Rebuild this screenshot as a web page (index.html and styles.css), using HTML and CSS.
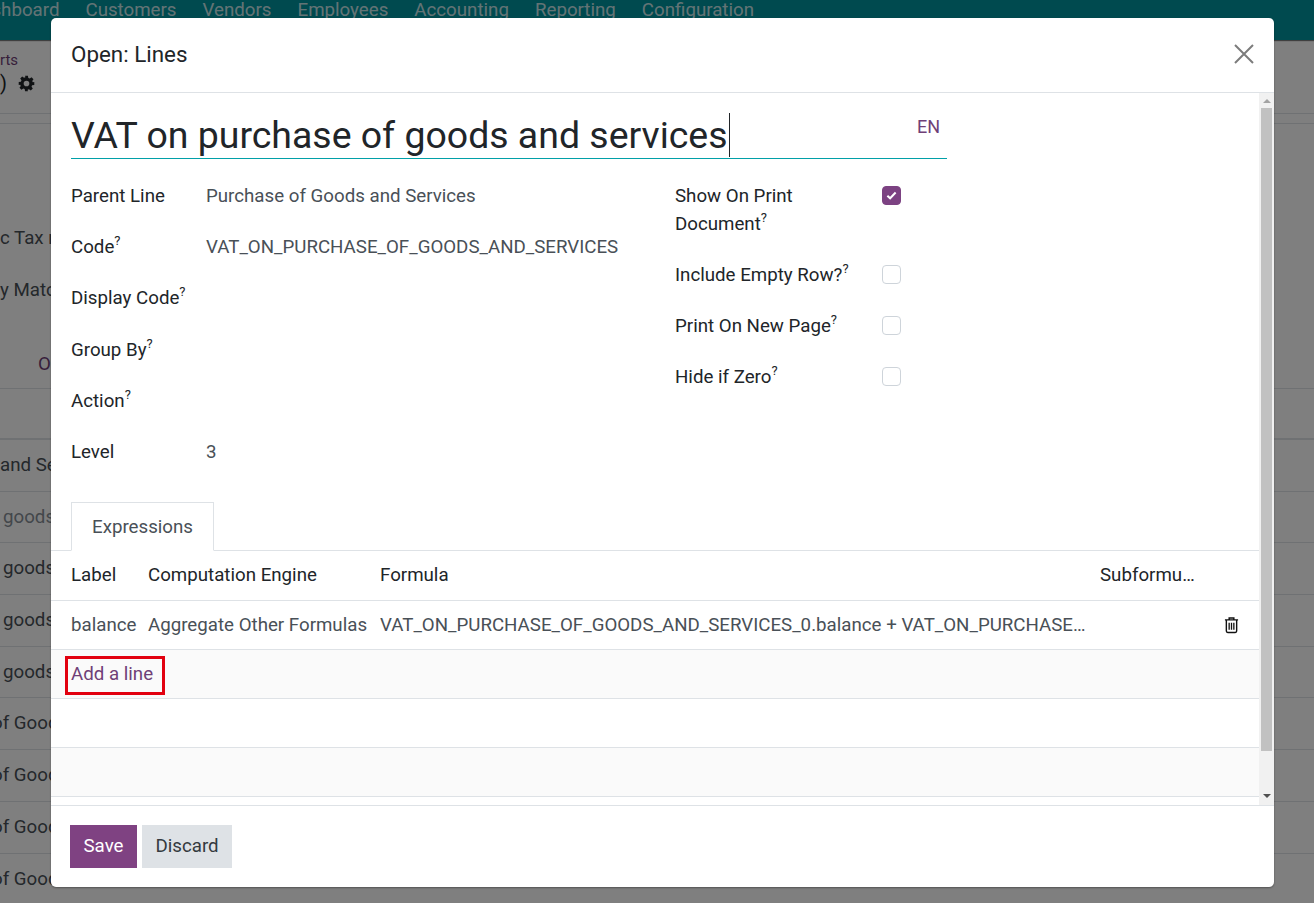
FILE: index.html
```html
<!DOCTYPE html>
<html lang="en">
<head>
<meta charset="utf-8">
<title>Open: Lines</title>
<link rel="stylesheet" href="styles.css">
</head>
<body>
<div class="page">
  <nav class="nav">
    <span class="nav-first">Dashboard</span><span>Customers</span><span>Vendors</span><span>Employees</span><span>Accounting</span><span>Reporting</span><span>Configuration</span>
  </nav>
  <div class="crumbs">
    <a class="crumb-link">rts</a>
    <div class="crumb-title"><span>)</span>
      <svg class="gear" viewBox="0 0 24 24"><path fill="currentColor" fill-rule="evenodd" d="M10 1h4l.6 3.1 1.9.8 2.6-1.8 2.8 2.8-1.8 2.6.8 1.9L23 10v4l-3.100.6-.8 1.900 1.800 2.600-2.800 2.800-2.600-1.800-1.900.8L14 23h-4l-.6-3.100-1.900-.8-2.600 1.800-2.800-2.800 1.800-2.600-.8-1.900L1 14v-4l3.100-.6.8-1.900-1.800-2.600 2.800-2.800 2.600 1.800 1.900-.8zM12 8a4 4 0 1 0 0 8 4 4 0 0 0 0-8z"/></svg>
    </div>
  </div>
  <div class="strip"></div>
  <div class="options">
    <div class="opt-line">c Tax report</div>
    <div class="opt-line">y Matching</div>
    <div class="opt-link">Options</div>
  </div>
  <div class="head-row"></div>
  <div class="bg-row"><span>and Services</span></div>
  <div class="bg-row muted"><span class="goods">goods and services</span></div>
  <div class="bg-row"><span class="goods">goods and services</span></div>
  <div class="bg-row"><span class="goods">goods and services</span></div>
  <div class="bg-row"><span class="goods">goods and services</span></div>
  <div class="bg-row"><span class="ofg">of Goods and Services</span></div>
  <div class="bg-row"><span class="ofg">of Goods and Services</span></div>
  <div class="bg-row"><span class="ofg">of Goods and Services</span></div>
  <div class="bg-row"><span class="ofg">of Goods and Services</span></div>
</div>

<div class="backdrop"></div>

<section class="modal">
  <header class="modal-head">
    <h4 class="modal-title">Open: Lines</h4>
    <svg class="close" viewBox="0 0 20 20"><path d="M1 1l18 18M19 1L1 19" fill="none" stroke="currentColor" stroke-width="2"/></svg>
  </header>

  <div class="modal-mid">
    <div class="modal-body">
      <div class="title-wrap">
        <div class="title-field"><span>VAT on purchase of goods and services</span><i class="caret"></i></div>
        <span class="lang">EN</span>
      </div>

      <div class="form">
        <div class="col-left">
          <div class="frow"><label>Parent Line</label><span class="val">Purchase of Goods and Services</span></div>
          <div class="frow"><label>Code<sup>?</sup></label><span class="val">VAT_ON_PURCHASE_OF_GOODS_AND_SERVICES</span></div>
          <div class="frow"><label>Display Code<sup>?</sup></label></div>
          <div class="frow"><label>Group By<sup>?</sup></label></div>
          <div class="frow"><label>Action<sup>?</sup></label></div>
          <div class="frow"><label>Level</label><span class="val">3</span></div>
        </div>
        <div class="col-right">
          <div class="crow first"><label>Show On Print Document<sup>?</sup></label>
            <span class="check on"><svg viewBox="0 0 12 12"><path d="M1.500 6.200l3 2.800 6-6.200" fill="none" stroke="#fff" stroke-width="2.200"/></svg></span></div>
          <div class="crow"><label>Include Empty Row?<sup>?</sup></label><span class="check"></span></div>
          <div class="crow"><label>Print On New Page<sup>?</sup></label><span class="check"></span></div>
          <div class="crow"><label>Hide if Zero<sup>?</sup></label><span class="check"></span></div>
        </div>
      </div>

      <div class="tabs"><span class="tab">Expressions</span></div>

      <div class="trow thead">
        <span>Label</span><span>Computation Engine</span><span>Formula</span><span>Subformu…</span>
      </div>
      <div class="trow tdata">
        <span>balance</span><span>Aggregate Other Formulas</span>
        <span class="formula">VAT_ON_PURCHASE_OF_GOODS_AND_SERVICES_0.balance + VAT_ON_PURCHASE_OF_GOODS_AND_SERVICES_1.balance</span>
        <span></span>
        <svg class="trash" viewBox="0 0 16 18"><path d="M5.500 3V1.500h5V3M1 3.500h14M2.500 3.500v12a1.500 1.500 0 0 0 1.500 1.500h8a1.500 1.500 0 0 0 1.500-1.500v-12" fill="none" stroke="currentColor" stroke-width="1.500"/><path d="M5.500 6.500v7.500M8 6.500v7.500M10.500 6.500v7.500" fill="none" stroke="currentColor" stroke-width="1.400"/></svg>
      </div>
      <div class="trow alt"><a class="add-line">Add a line<i class="mark"></i></a></div>
      <div class="trow"></div>
      <div class="trow alt"></div>
    </div>

    <div class="scrollbar">
      <i class="arrow up"></i>
      <div class="thumb"></div>
      <i class="arrow down"></i>
    </div>
  </div>

  <footer class="modal-foot">
    <button class="btn primary">Save</button>
    <button class="btn secondary">Discard</button>
  </footer>
</section>
</body>
</html>
```

FILE: styles.css
```css
* { box-sizing: border-box; }
html, body { margin: 0; height: 100%; overflow: hidden; }
body {
  position: relative;
  background: #fff;
  color: #495057;
  font-family: Roboto, "Noto Sans", sans-serif;
  font-size: 18.72px;
  line-height: 27px;
}

/* page behind the dialog */
.page { height: 903px; overflow: hidden; }
.nav {
  height: 40px;
  background: #00949f;
  display: flex;
  gap: 26px;
  color: rgba(255, 255, 255, .8);
  line-height: 20px;
  box-shadow: 0 1px 1px rgba(0, 0, 0, .5);
  white-space: nowrap;
}
.nav-first { margin-left: -31px; }
.crumbs { height: 73px; padding-top: 8px; }
.crumb-link { display: block; color: #6f3f77; font-size: 15px; line-height: 24px; }
.crumb-title { display: flex; align-items: center; gap: 11px; height: 22px; font-size: 20px; color: #212529; }
.gear { width: 17px; height: 17px; color: #212529; }
.strip { height: 11px; border-top: 1px solid #dee2e6; border-bottom: 1px solid #dee2e6; }
.options { height: 264px; padding-top: 88px; white-space: nowrap; }
.opt-line { height: 52px; line-height: 52px; }
.opt-link { margin-top: 22px; padding-left: 38px; height: 52px; line-height: 52px; color: #6f3f77; }
.head-row { height: 52px; border-top: 1px solid #dee2e6; border-bottom: 2px solid #dee2e6; }
.bg-row { height: 51.7px; border-bottom: 1px solid #dee2e6; line-height: 50px; white-space: nowrap; }
.bg-row.muted { color: #868e96; }
.goods { margin-left: 3px; }
.ofg { margin-left: -8px; display: inline-block; }

.backdrop { position: absolute; inset: 0; background: rgba(0, 0, 0, .5); }

/* dialog */
.modal {
  position: absolute;
  left: 51px;
  top: 18px;
  width: 1223px;
  height: 869px;
  display: flex;
  flex-direction: column;
  background: #fff;
  border-radius: 5px;
  box-shadow: 0 1px 2px rgba(0, 0, 0, .35);
  overflow: hidden;
}
.modal-head {
  flex: none;
  height: 75px;
  padding: 0 20px 2px;
  display: flex;
  align-items: center;
  justify-content: space-between;
  border-bottom: 1px solid #dee2e6;
}
.modal-title { margin: 0; font-size: 22.4px; font-weight: 400; color: #212529; }
.close { width: 20px; height: 20px; color: #7c7c7c; }

.modal-mid { flex: 1; min-height: 0; display: flex; }
.modal-body { flex: 1; min-width: 0; overflow: hidden; padding-top: 20px; }

.title-wrap { position: relative; width: 896px; padding-left: 20px; }
.title-field {
  height: 46px;
  display: flex;
  font-size: 37.45px;
  line-height: 44px;
  color: #212529;
  border-bottom: 1px solid #01a0a8;
}
.caret { width: 1px; height: 44px; margin-left: 1px; background: #212529; }
.lang { position: absolute; left: 866px; top: 0; font-size: 18px; line-height: 27px; color: #6f3f77; }

.form { display: flex; padding: 11px 0 0 20px; height: 318px; }
.col-left { width: 604px; }
.frow { display: flex; height: 51.2px; padding-top: 13px; }
.frow label { flex: none; width: 135px; color: #212529; }
.col-right { width: 226px; }
.crow { display: flex; justify-content: space-between; padding-top: 12.5px; height: 51.2px; line-height: 28px; }
.crow.first { height: 78px; padding-top: 12px; }
.crow label { flex: 0 1 190px; color: #212529; }
.val { white-space: nowrap; color: #495057; }
sup { font-size: 13px; line-height: 0; vertical-align: baseline; position: relative; top: -8px; }

.check {
  flex: none;
  width: 19px;
  height: 19px;
  margin-top: 4px;
  border: 1px solid #ced4da;
  border-radius: 4px;
  background: #fff;
}
.check.on { background: #7c4282; border-color: #7c4282; padding: 3px; }
.check svg { display: block; }

.tabs { height: 49px; margin-top: 25px; padding-left: 20px; border-bottom: 1px solid #dee2e6; }
.tab {
  display: block;
  width: 143px;
  height: 49px;
  padding: 11px 0 0 20px;
  background: #fff;
  border: 1px solid #dee2e6;
  border-bottom-color: #fff;
  color: #495057;
}

.trow {
  display: grid;
  grid-template-columns: 77px 232px 708px 120px 1fr;
  align-items: center;
  height: 49px;
  padding-left: 20px;
  border-bottom: 1px solid #dee2e6;
  white-space: nowrap;
}
.trow.thead { height: 50px; color: #212529; }
.thead span:nth-child(4) { margin-left: 12px; }
.alt { background: #fafafa; }
.formula { overflow: hidden; text-overflow: ellipsis; }
.trash { width: 15px; height: 18px; color: #111; margin-left: 16px; }

.add-line { position: relative; color: #6f3f77; }
.mark {
  position: absolute;
  left: -6px;
  top: -5px;
  width: 100px;
  height: 39px;
  border: 3px solid #e2000f;
}

.scrollbar {
  flex: none;
  width: 15px;
  background: #f1f1f1;
  display: flex;
  flex-direction: column;
  align-items: center;
}
.thumb { width: 11px; height: 643px; margin-top: 5px; background: #c1c1c1; }
.arrow { width: 0; height: 0; border-left: 4px solid transparent; border-right: 4px solid transparent; }
.arrow.up { margin-top: 6px; border-bottom: 4px solid #a3a3a3; }
.arrow.down { margin-top: 43px; border-top: 4px solid #505050; }

.modal-foot {
  flex: none;
  height: 82px;
  padding: 19px 0 0 19px;
  display: flex;
  align-items: flex-start;
  gap: 5px;
  border-top: 1px solid #dee2e6;
}
.btn {
  height: 43px;
  border: 0;
  border-radius: 0;
  font: inherit;
  padding: 0 13.5px;
}
.primary { background: #7f4282; color: #fff; }
.secondary { background: #dee2e6; color: #343a40; }
```
